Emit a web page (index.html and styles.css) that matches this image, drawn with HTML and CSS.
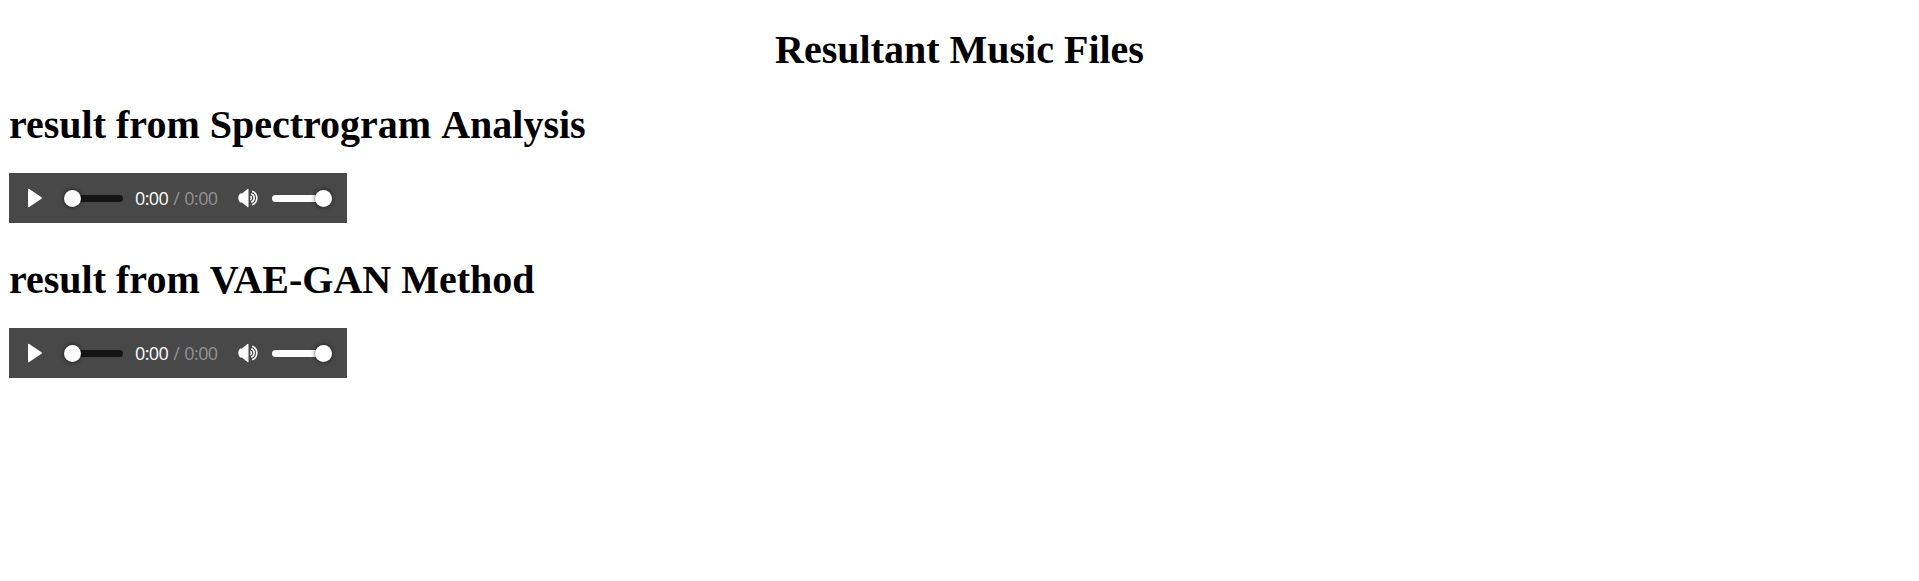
FILE: index.html
```html
<!DOCTYPE html>
<html lang="en">
<head>
<meta charset="utf-8">
<title>Resultant Music Files</title>
<link rel="stylesheet" href="styles.css">
</head>
<body>
<h1 class="title">Resultant Music Files</h1>
<h1 class="heading">result from Spectrogram <span class="word">Analysis</span></h1>
<div class="player">
  <svg class="play" viewBox="0 0 16 20"><path d="M1 1.500Q1 .2 2.200 1L14.500 9.200Q15.500 10 14.500 10.800L2.200 19Q1 19.800 1 18.500Z"/></svg>
  <div class="scrubber"><span class="thumb"></span></div>
  <span class="time">0:00 <span class="duration">/ 0:00</span></span>
  <svg class="speaker" viewBox="0 0 22 20"><path d="M2 5.500h2L9.500 1q1-.7 1 .5v17q0 1.200-1 .5L4 14.500H2Q-1.500 10 2 5.500z"/><path class="wave" d="M12.300 8.200A2 2 0 0 1 12.300 11.800M13.200 5.700A4.600 4.600 0 0 1 13.200 14.300M14.200 3.200A7.300 7.300 0 0 1 14.200 16.800"/></svg>
  <div class="volume"><span class="thumb"></span></div>
</div>
<h1 class="heading">result from <span class="word">VAE-GAN</span> Method</h1>
<div class="player">
  <svg class="play" viewBox="0 0 16 20"><path d="M1 1.500Q1 .2 2.200 1L14.500 9.200Q15.500 10 14.500 10.800L2.200 19Q1 19.800 1 18.500Z"/></svg>
  <div class="scrubber"><span class="thumb"></span></div>
  <span class="time">0:00 <span class="duration">/ 0:00</span></span>
  <svg class="speaker" viewBox="0 0 22 20"><path d="M2 5.500h2L9.500 1q1-.7 1 .5v17q0 1.200-1 .5L4 14.500H2Q-1.500 10 2 5.500z"/><path class="wave" d="M12.300 8.200A2 2 0 0 1 12.300 11.800M13.200 5.700A4.600 4.600 0 0 1 13.200 14.300M14.200 3.200A7.300 7.300 0 0 1 14.200 16.800"/></svg>
  <div class="volume"><span class="thumb"></span></div>
</div>
</body>
</html>
```
FILE: styles.css
```css
body { margin: 0 9px; background: #fff; color: #000; font-family: "Liberation Serif", serif; }
.title, .heading { margin: 0; font-size: 40px; line-height: 46px; font-weight: bold; }
.title { padding-top: 27px; text-align: center; }
.heading { margin: 34px 0 25px; }
.title + .heading { margin-top: 29px; }
.word { display: inline-block; }
.player { display: flex; align-items: center; box-sizing: border-box; width: 338px; height: 50px; padding-left: 18px; background: #484848; }
.play { width: 16px; height: 20px; fill: #fff; }
.scrubber, .volume { display: flex; align-items: center; height: 7px; border-radius: 4px; }
.scrubber { width: 58px; margin-left: 22px; background: #151515; }
.volume { width: 60px; margin-left: 12px; background: #fff; justify-content: flex-end; }
.thumb { width: 17px; height: 17px; border-radius: 50%; background: #fff; box-shadow: 0 0 4px rgba(0, 0, 0, .7); }
.scrubber .thumb { margin-left: -1px; }
.time { width: 92px; margin-left: 12px; font: 18px "Open Sans", sans-serif; letter-spacing: -.6px; word-spacing: 1px; color: #fff; white-space: nowrap; }
.duration { color: #929292; }
.speaker { width: 22px; height: 20px; margin-left: 11px; fill: #fff; }
.wave { fill: none; stroke: #fff; stroke-width: 1.5; }
```
